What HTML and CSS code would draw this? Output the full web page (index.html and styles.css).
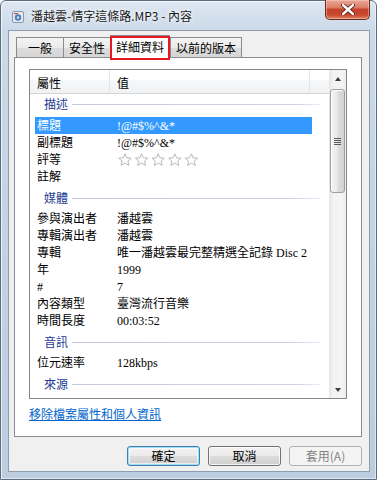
FILE: index.html
```html
<!DOCTYPE html>
<html lang="zh-Hant">
<head>
<meta charset="utf-8">
<title>內容</title>
<link rel="stylesheet" href="styles.css">
</head>
<body>
<div class="window">
  <div class="titlebar">
    <svg class="app-icon" width="12" height="12" viewBox="0 0 12 12">
      <rect x="0.5" y="0.5" width="11" height="11" rx="1.5" fill="#e4e9ef" stroke="#8a97a8"/>
      <circle cx="6" cy="6.5" r="3.2" fill="#4d7fb8"/>
      <circle cx="6" cy="6.5" r="1.2" fill="#d8e4f0"/>
      <rect x="2" y="2" width="4" height="1.2" fill="#c05a3c"/>
    </svg>
    <span class="title">潘越雲-情字這條路.MP3 - 內容</span>
    <div class="close-btn">
      <svg width="14" height="11" viewBox="0 0 14 11">
        <path d="M2 1 L12 10 M12 1 L2 10" stroke="#5a1d12" stroke-width="4.2" stroke-linecap="round"/>
        <path d="M2 1 L12 10 M12 1 L2 10" stroke="#ffffff" stroke-width="2.4" stroke-linecap="round"/>
      </svg>
    </div>
  </div>

  <div class="client">
    <div class="tabs">
      <div class="tab">一般</div>
      <div class="tab">安全性</div>
      <div class="tab tab-active">詳細資料</div>
      <div class="tab tab-wide">以前的版本</div>
    </div>

    <div class="panel">
      <div class="listview">
        <div class="lv-main">
          <div class="lv-header">
            <div class="hcell hcell-name">屬性</div>
            <div class="hcell hcell-value">值</div>
            <div class="hcell hcell-rest"></div>
          </div>

          <div class="lv-body">
            <div class="group group-first"><span class="group-label">描述</span></div>
            <div class="row row-selected"><span class="name">標題</span><span class="value">!@#$%^&amp;*</span></div>
            <div class="row"><span class="name">副標題</span><span class="value">!@#$%^&amp;*</span></div>
            <div class="row"><span class="name">評等</span>
              <span class="value stars">
                <svg width="83" height="13" viewBox="0 0 83 13">
                  <g fill="#ffffff" stroke="#b9b9b9" stroke-width="1" stroke-linejoin="round">
                    <polygon points="7,0.8 8.8,4.8 13.2,5.2 9.9,8.1 10.9,12.4 7,10.1 3.1,12.4 4.1,8.1 0.8,5.2 5.2,4.8"/>
                    <polygon transform="translate(16.6 0)" points="7,0.8 8.8,4.8 13.2,5.2 9.9,8.1 10.9,12.4 7,10.1 3.1,12.4 4.1,8.1 0.8,5.2 5.2,4.8"/>
                    <polygon transform="translate(33.2 0)" points="7,0.8 8.8,4.8 13.2,5.2 9.9,8.1 10.9,12.4 7,10.1 3.1,12.4 4.1,8.1 0.8,5.2 5.2,4.8"/>
                    <polygon transform="translate(49.8 0)" points="7,0.8 8.8,4.8 13.2,5.2 9.9,8.1 10.9,12.4 7,10.1 3.1,12.4 4.1,8.1 0.8,5.2 5.2,4.8"/>
                    <polygon transform="translate(66.4 0)" points="7,0.8 8.8,4.8 13.2,5.2 9.9,8.1 10.9,12.4 7,10.1 3.1,12.4 4.1,8.1 0.8,5.2 5.2,4.8"/>
                  </g>
                </svg>
              </span>
            </div>
            <div class="row"><span class="name">註解</span><span class="value"></span></div>

            <div class="group"><span class="group-label">媒體</span></div>
            <div class="row"><span class="name">參與演出者</span><span class="value">潘越雲</span></div>
            <div class="row"><span class="name">專輯演出者</span><span class="value">潘越雲</span></div>
            <div class="row"><span class="name">專輯</span><span class="value">唯一潘越雲最完整精選全記錄 Disc 2</span></div>
            <div class="row"><span class="name">年</span><span class="value">1999</span></div>
            <div class="row"><span class="name">#</span><span class="value">7</span></div>
            <div class="row"><span class="name">內容類型</span><span class="value">臺灣流行音樂</span></div>
            <div class="row"><span class="name">時間長度</span><span class="value">00:03:52</span></div>

            <div class="group"><span class="group-label">音訊</span></div>
            <div class="row"><span class="name">位元速率</span><span class="value">128kbps</span></div>

            <div class="group"><span class="group-label">來源</span></div>
          </div>
        </div>

        <div class="scrollbar">
          <div class="sb-btn"><span class="arrow-up"></span></div>
          <div class="sb-track">
            <div class="sb-thumb"><span class="grip"></span></div>
          </div>
          <div class="sb-btn"><span class="arrow-down"></span></div>
        </div>
      </div>

      <a class="link" href="#">移除檔案屬性和個人資訊</a>
    </div>

    <div class="actions">
      <button class="btn btn-default">確定</button>
      <button class="btn">取消</button>
      <button class="btn" disabled>套用(A)</button>
    </div>
  </div>
</div>
</body>
</html>
```

FILE: styles.css
```css
html, body {
  margin: 0;
  padding: 0;
}

body {
  width: 377px;
  height: 480px;
  overflow: hidden;
  font-family: "Noto Sans CJK TC", "Noto Sans", sans-serif;
  font-size: 12px;
  color: #000;
  background: #ffffff;
}

.window {
  box-sizing: border-box;
  width: 377px;
  height: 480px;
  border: 1px solid #5d6c7e;
  border-radius: 6px 6px 0 0;
  padding: 0 6px 7px 7px;
  display: flex;
  flex-direction: column;
  background: linear-gradient(#dde7f2 0, #cbd9e8 29px, #c2d2e3 60%, #bccde0 100%);
  box-shadow: inset 1px 1px 0 rgba(255, 255, 255, 0.7), inset -1px -1px 0 rgba(255, 255, 255, 0.5);
}

/* ---------- title bar ---------- */
.titlebar {
  height: 29px;
  display: flex;
  align-items: center;
}

.app-icon {
  margin-left: 4px;
  margin-top: 2px;
  flex: none;
}

.title {
  margin-left: 7px;
  margin-top: 1px;
  line-height: 16px;
  white-space: nowrap;
  color: #1a1a1a;
  text-shadow: 0 0 6px rgba(255, 255, 255, 0.95), 0 0 3px rgba(255, 255, 255, 0.9);
}

.close-btn {
  box-sizing: border-box;
  margin-left: auto;
  align-self: flex-start;
  margin-top: -1px;
  width: 45px;
  height: 20px;
  border: 1px solid #6a2b20;
  border-top: none;
  border-radius: 0 0 5px 5px;
  display: flex;
  align-items: center;
  justify-content: center;
  background: linear-gradient(#eaa999 0, #db7d67 40%, #c4412a 50%, #c9492f 80%, #e08a6e 100%);
  box-shadow: inset 0 0 0 1px rgba(255, 210, 200, 0.45);
}

/* ---------- client area ---------- */
.client {
  flex: 1;
  box-sizing: border-box;
  background: #f0f0f0;
  border: 1px solid #8e9cad;
  padding: 4px 7px 0 5px;
  display: flex;
  flex-direction: column;
}

.tabs {
  height: 23px;
  margin-bottom: -1px;
  padding-left: 2px;
  display: flex;
  align-items: flex-start;
  position: relative;
  z-index: 1;
}

.tab {
  box-sizing: border-box;
  width: 48px;
  height: 20px;
  margin-top: 2px;
  margin-left: -1px;
  border: 1px solid #898c95;
  border-bottom: none;
  background: linear-gradient(#f4f4f4 0, #ebebeb 50%, #dddddd 51%, #d6d6d6 100%);
  display: flex;
  align-items: center;
  justify-content: center;
  line-height: 16px;
  white-space: nowrap;
}

.tab:first-child {
  margin-left: 0;
}

.tab-active {
  position: relative;
  width: 60px;
  height: 23px;
  margin-top: 0;
  background: #ffffff;
  padding-bottom: 1px;
}

.tab-active::after {
  content: "";
  position: absolute;
  left: -1px;
  right: -1px;
  top: 0;
  bottom: -2px;
  border: 2px solid #e5171f;
}

.tab-wide {
  width: 72px;
  margin-left: 0;
}

.panel {
  box-sizing: border-box;
  height: 380px;
  background: #ffffff;
  border: 1px solid #898c95;
  padding: 11px 14px 0 14px;
}

/* ---------- list view ---------- */
.listview {
  box-sizing: border-box;
  width: 318px;
  height: 330px;
  border: 1px solid #828790;
  display: flex;
  overflow: hidden;
  font-family: "Liberation Serif", "Noto Sans CJK TC", serif;
}

.lv-main {
  flex: 1;
  min-width: 0;
  display: flex;
  flex-direction: column;
}

.lv-header {
  box-sizing: border-box;
  height: 24px;
  flex: none;
  display: flex;
  border-bottom: 1px solid #d5d5d5;
  background: linear-gradient(#ffffff 0, #ffffff 45%, #f6f7f8 46%, #f1f2f4 100%);
  font-family: "Noto Sans CJK TC", sans-serif;
}

.hcell {
  box-sizing: border-box;
  height: 100%;
  display: flex;
  align-items: center;
  padding-left: 7px;
  padding-top: 2px;
  line-height: 16px;
  border-right: 1px solid #e3e5e8;
}

.hcell-name {
  width: 80px;
}

.hcell-value {
  width: 200px;
}

.hcell-rest {
  flex: 1;
  border-right: none;
}

.lv-body {
  flex: 1;
}

.group {
  height: 25px;
  display: flex;
  align-items: center;
  padding-left: 14px;
  padding-right: 9px;
  box-sizing: border-box;
}

.group-first {
  height: 23px;
  padding-bottom: 3px;
}

.group::after {
  content: "";
  flex: 1;
  height: 1px;
  margin-left: 4px;
  margin-top: 1px;
  background: linear-gradient(90deg, #c6c9e2 0, #cdd0e6 90%, #eceef6 100%);
}

.group-label {
  line-height: 16px;
  color: #1e3a91;
  font-family: "Noto Sans CJK TC", sans-serif;
}

.row {
  height: 17px;
  width: 277px;
  margin-left: 5px;
  display: flex;
  align-items: center;
  line-height: 16px;
  white-space: nowrap;
}

.row .name {
  box-sizing: border-box;
  width: 82px;
  padding-left: 2px;
  flex: none;
}

.row .value {
  flex: 1;
}

.row-selected {
  background: #3399ff;
  color: #ffffff;
}

.stars {
  display: flex;
  align-items: center;
  padding-left: 1px;
}

/* ---------- scrollbar ---------- */
.scrollbar {
  width: 17px;
  flex: none;
  display: flex;
  flex-direction: column;
  background: linear-gradient(90deg, #e6e6e6 0, #f3f3f3 25%, #f5f5f5 75%, #ececec 100%);
}

.sb-btn {
  height: 17px;
  flex: none;
  display: flex;
  align-items: center;
  justify-content: center;
}

.arrow-up,
.arrow-down {
  width: 0;
  height: 0;
  border-left: 3.5px solid transparent;
  border-right: 3.5px solid transparent;
}

.arrow-up {
  border-bottom: 4px solid #3d3d3d;
}

.arrow-down {
  border-top: 4px solid #3d3d3d;
}

.sb-track {
  flex: 1;
  padding-top: 2px;
}

.sb-thumb {
  box-sizing: border-box;
  width: 15px;
  height: 104px;
  margin-left: 1px;
  border: 1px solid #9d9d9d;
  border-radius: 3px;
  background: linear-gradient(90deg, #f4f4f4 0, #eaeaea 45%, #dcdcdc 55%, #d2d2d2 100%);
  box-shadow: inset 1px 1px 0 #ffffff;
  display: flex;
  align-items: center;
  justify-content: center;
}

.grip {
  width: 7px;
  height: 7px;
  background: repeating-linear-gradient(#5a5a5a 0, #5a5a5a 1px, transparent 1px, transparent 2px);
}

/* ---------- link & buttons ---------- */
.link {
  display: block;
  margin-top: 8px;
  width: max-content;
  line-height: 14px;
  color: #0066cc;
  text-decoration: underline;
}

.actions {
  display: flex;
  justify-content: flex-end;
  gap: 8px;
  margin-top: 9px;
}

.btn {
  box-sizing: border-box;
  width: 73px;
  height: 20px;
  padding: 0;
  border: 1px solid #707070;
  border-radius: 3px;
  font-family: "Noto Sans CJK TC", sans-serif;
  font-size: 12px;
  line-height: 16px;
  color: #000;
  background: linear-gradient(#f2f2f2 0, #ebebeb 50%, #dddddd 51%, #cfcfcf 100%);
  box-shadow: inset 0 0 0 1px rgba(255, 255, 255, 0.8);
}

.btn-default {
  border-color: #3c7fb1;
  box-shadow: inset 0 0 0 1px #9fdcf6, inset 0 0 0 2px rgba(255, 255, 255, 0.6);
}

.btn:disabled {
  border-color: #adb2b5;
  background: #f4f4f4;
  color: #838383;
  box-shadow: none;
}
```
